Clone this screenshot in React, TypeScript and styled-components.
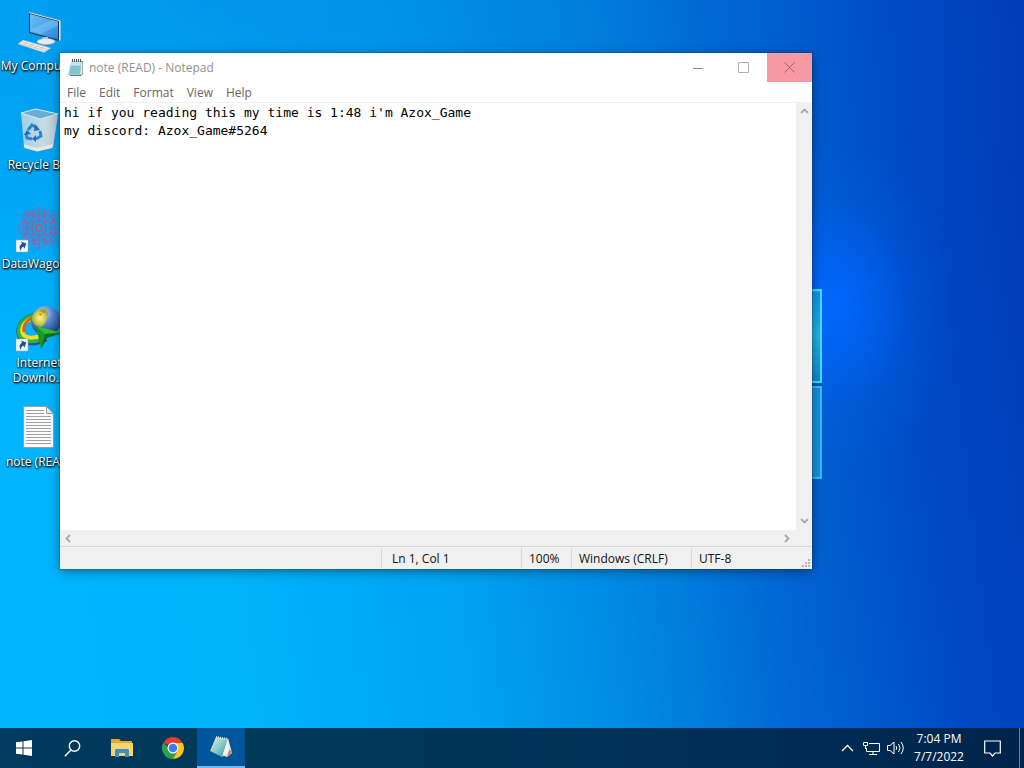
import React from "react";
import styled, { createGlobalStyle } from "styled-components";

const Global = createGlobalStyle`
  * { box-sizing: border-box; }
  html, body, #root { height: 100%; margin: 0; }
  body { font-family: "Open Sans", "Noto Sans", sans-serif; font-size: 12px; overflow: hidden; }
  button, textarea { font: inherit; border: 0; padding: 0; margin: 0; background: none; color: inherit; }
`;

const Screen = styled.div`
  height: 100vh;
  display: flex;
  flex-direction: column;
  background:
    radial-gradient(ellipse 130px 170px at 81% 40%, #0068ff 0%, rgba(0, 102, 252, 0.75) 25%, rgba(0, 98, 245, 0.25) 60%, rgba(0, 96, 240, 0) 100%),
    radial-gradient(ellipse 90% 50% at 20% 0%, rgba(0, 112, 215, 0.4) 0%, rgba(0, 112, 215, 0.2) 50%, rgba(0, 112, 215, 0) 100%),
    linear-gradient(83deg, #00b4ff 0%, #00b4fa 22%, #00a4f2 42%, #0088e2 58%, #0062d0 74%, #0049c4 87%, #0039b4 100%);
`;

const Desktop = styled.main`
  flex: 1;
  position: relative;
  min-height: 0;
`;

const IconColumn = styled.nav`
  display: flex;
  flex-direction: column;
  width: 78px;
  padding-top: 8px;
`;

const Shortcut = styled.button`
  display: flex;
  flex-direction: column;
  align-items: center;
  height: 99px;
  gap: 2px;
  color: #fff;
  line-height: 15px;
  white-space: nowrap;
  text-shadow: 1px 1px 2px #000, 0 1px 2px #000;
`;

const Panes = styled.svg`
  position: absolute;
  left: 728px;
  top: 288px;
`;

const Window = styled.section`
  position: absolute;
  left: 60px;
  top: 53px;
  width: 752px;
  height: 516px;
  display: flex;
  flex-direction: column;
  background: #fff;
  box-shadow: 0 0 1px rgba(0, 30, 60, 0.8), 0 2px 10px rgba(0, 0, 0, 0.45);
`;

const TitleBar = styled.header`
  display: flex;
  height: 29px;
  color: #929292;
`;

const Title = styled.h1`
  flex: 1;
  display: flex;
  align-items: center;
  gap: 4px;
  margin: 0;
  padding-left: 8px;
  font-size: 12px;
  font-weight: 400;
`;

const Caption = styled.button<{ $close?: boolean }>`
  display: flex;
  align-items: center;
  justify-content: center;
  width: 45px;
  height: 29px;
  padding-right: ${(p) => (p.$close ? 1 : 3)}px;
  background: ${(p) => (p.$close ? "#f59aa4" : "transparent")};
`;

const MenuBar = styled.nav`
  display: flex;
  height: 21px;
  gap: 13px;
  padding-left: 7px;
  color: #666;
  border-bottom: 1px solid #f0f0f0;
  button { line-height: 22px; }
`;

const Editor = styled.div`
  flex: 1;
  min-height: 0;
  display: grid;
  grid-template: 1fr 16px / 1fr 16px;
  background: #f0f0f0;
`;

const Text = styled.textarea`
  && {
    width: 100%;
    height: 100%;
    padding: 1px 4px;
    resize: none;
    outline: none;
    overflow: hidden;
    background: #fff;
    color: #000;
    font: 13px/18px "DejaVu Sans Mono", monospace;
  }
`;

const ScrollBar = styled.div<{ $across?: boolean }>`
  display: flex;
  flex-direction: ${(p) => (p.$across ? "row" : "column")};
  justify-content: space-between;
  padding: ${(p) => (p.$across ? "0 2px 0 0" : "0 1px 2px 0")};
  button { display: flex; align-items: center; justify-content: center; width: 16px; height: 16px; }
`;

const StatusBar = styled.footer`
  display: flex;
  height: 23px;
  background: #f0f0f0;
  border-top: 1px solid #d7d7d7;
  color: #111;
  position: relative;
`;

const Cell = styled.span<{ $width?: number; $pad?: number }>`
  flex: ${(p) => (p.$width ? `0 0 ${p.$width}px` : "1")};
  padding-left: ${(p) => p.$pad ?? 7}px;
  margin: 1px 0;
  line-height: 22px;
  white-space: nowrap;
  & + & { border-left: 1px solid #d7d7d7; }
`;

const Grip = styled.svg`
  position: absolute;
  right: 2px;
  bottom: 2px;
`;

const TaskBar = styled.footer`
  display: flex;
  height: 40px;
  background: linear-gradient(90deg, #003a5c 0%, #003658 40%, #002d55 75%, #00234a 100%);
  color: #fff;
`;

const Task = styled.button<{ $width: number; $active?: boolean }>`
  display: flex;
  align-items: center;
  justify-content: center;
  width: ${(p) => p.$width}px;
  height: 40px;
  background: ${(p) => (p.$active ? "#00569a" : "transparent")};
  border-bottom: ${(p) => (p.$active ? "2px solid #76b9ed" : "0")};
`;

const Tray = styled.div`
  display: flex;
  align-items: center;
  margin-left: auto;
`;

const Clock = styled.button`
  width: 58px;
  padding-left: 6px;
  line-height: 18px;
  text-align: center;
  white-space: nowrap;
`;

const ShowDesktop = styled.button`
  width: 5px;
  height: 40px;
  border-left: 1px solid #5f7d97;
`;

const Arrow = ({ turn }: { turn: number }) => (
  <svg width="9" height="9" viewBox="0 0 9 9" fill="none" stroke="#a9a9a9" strokeWidth="1.800">
    <path d="M1 6 4.500 2.500 8 6" transform={`rotate(${turn} 4.500 4.500)`} />
  </svg>
);

const ShortcutMark = () => (
  <g>
    <path d="M0 34h12v12H0z" fill="#f6f8fb" stroke="#9ab" strokeWidth=".5" />
    <path d="M3 44c-.5-4 1-6 4-6v-2.500l4 4-4 4V41c-2 0-3 1-4 3z" fill="#1e4f9c" transform="rotate(-25 6 40)" />
  </g>
);

const Computer = () => (
  <svg width="46" height="48" viewBox="0 0 46 48">
    <defs>
      <linearGradient id="scr" x1="0" y1="0" x2="1" y2="1">
        <stop offset="0" stopColor="#6cc0f5" /><stop offset=".5" stopColor="#4aa8ee" /><stop offset="1" stopColor="#2286dc" />
      </linearGradient>
    </defs>
    <path d="M13 4 43 12v21L13 25z" fill="#24384a" />
    <path d="M13 4 43 12v1L13 5z" fill="#e8eef2" />
    <path d="M14 6 42 13.500v18L14 24z" fill="url(#scr)" />
    <path d="M14 22 36 12l6 1.500v4L24 26.500z" fill="#a9dcfb" opacity=".3" />
    <path d="M43 12v21l1.500-1V13z" fill="#dfe3e6" />
    <path d="M27 29h5l1 5h-8z" fill="#c3cbd1" />
    <ellipse cx="30" cy="33.500" rx="9" ry="3" fill="#e6eaed" stroke="#aab3ba" strokeWidth=".6" />
    <path d="M7 32 35 40l-7 4.500L2 36z" fill="#f1f1ee" stroke="#a5a9a8" strokeWidth=".6" />
    <path d="m6 34 26 7.500M4 35.500 30 43M12 33.500 7 37m11-2-5 3.500m11-2L19 40m10-2-5 4" stroke="#b6bbbb" strokeWidth=".7" />
  </svg>
);

const Bin = () => (
  <svg width="46" height="48" viewBox="0 0 46 48">
    <defs>
      <linearGradient id="bin" x1="0" x2="1"><stop offset="0" stopColor="#b8d3e4" /><stop offset=".6" stopColor="#dbe5eb" /><stop offset="1" stopColor="#aebfca" /></linearGradient>
    </defs>
    <path d="m5 6 19 5 18-4-5 33-16 4-13-4z" fill="url(#bin)" opacity=".88" />
    <path d="M5 6 20 2l22 5-18 5z" fill="#6aaed4" stroke="#dcebf2" strokeWidth="1" />
    <path d="m24 12-3 32 16-4 5-33z" fill="#cbd7de" opacity=".6" />
    <path d="m8 37 13 4 16-4-.5 4-15.500 3.500L8.500 41z" fill="#ebe6e1" />
    <g fill="none" stroke="#2a86cf" strokeWidth="3">
      <path d="m12 23 4-5 5 3" /><path d="m24 24 1 5-5 3" /><path d="m16 32-5-1-1-5" />
    </g>
    <path d="m19 17 5 6-6 1zM20 28v7l-4-3zM8 28l3-5 4 4z" fill="#1c6fbc" />
  </svg>
);

const Wagon = () => {
  const marks = Array.from({ length: 8 }, (_, i) => i * 45);
  return (
    <svg width="46" height="48" viewBox="0 0 46 48" fill="none">
      <g transform="translate(23 22)" stroke="#6d74b8" strokeWidth="1">
        {marks.map((a) => (
          <g key={a} transform={`rotate(${a})`}>
            <path d="M0-3v-18M-5-12h10v-8h-10zM-3-8l8-4M3-8l-8-4" />
            <circle cx="-5" cy="-12" r="1.200" stroke="#b8568c" />
            <circle cx="5" cy="-16" r="1.200" stroke="#b8568c" />
            <path d="M-3-16h6" stroke="#b8568c" />
          </g>
        ))}
        <circle r="7" stroke="#b24f86" /><circle r="3" stroke="#d34c72" strokeWidth="1.500" />
        <path d="M-23-13h46M-20 13h40M-13-21v42M13-21v42" opacity=".7" />
      </g>
      <ShortcutMark />
    </svg>
  );
};

const Globe = () => (
  <svg width="46" height="48" viewBox="0 0 46 48">
    <defs>
      <radialGradient id="earth" cx=".4" cy=".25" r=".8"><stop offset="0" stopColor="#c2dcf6" /><stop offset=".4" stopColor="#5a8ad4" /><stop offset="1" stopColor="#1a367c" /></radialGradient>
      <radialGradient id="land"><stop offset="0" stopColor="#fff09a" /><stop offset=".6" stopColor="#d5cf48" /><stop offset="1" stopColor="#8fac48" /></radialGradient>
    </defs>
    <g fill="none">
      <path d="M18 9C5 12-2 23 3 33c5 8 17 8 28 2" stroke="#2849a8" strokeWidth="2" />
      <path d="M20 10C7 12 0 23 4 31c4 7 15 6 24 2" stroke="#36b428" strokeWidth="4" />
      <path d="M20 13C10 14 4 22 7 29c3 5 11 4 18 2" stroke="#f2dc2c" strokeWidth="4" />
      <path d="M20 12C11 14 7 20 8 27" stroke="#e8541c" strokeWidth="3" />
    </g>
    <circle cx="30" cy="16" r="15" fill="url(#earth)" />
    <path d="M16 11c3-6 8-8 14-7 3 4 3 8 0 11 0 3-2 6-6 7-6-1-9-6-8-11z" fill="url(#land)" />
    <path d="m24 6 3-1 3 2-3 1zM23 8l3 1-2 2z" fill="#d8783e" />
    <path d="m20 21 26 7-15 5-6 11z" fill="#18962a" />
    <path d="m20 21 26 7-17 1z" fill="#2fbb35" /><path d="m29 29-4 15 6-11 15-5z" fill="#0c6b1b" />
    <ShortcutMark />
  </svg>
);

const Paper = () => (
  <svg width="46" height="48" viewBox="0 0 46 48">
    <path d="M7.500 2.500h23l7 7v34h-30z" fill="#fbfbfb" stroke="#9c9c9c" />
    <path d="M30.500 2.500v7h7z" fill="#e7e7e7" stroke="#9c9c9c" />
    <path d="M10 6.500h18M10 9.500h18M10 12.500h25M10 15.500h25M10 18.500h25M10 21.500h25M10 24.500h25M10 27.500h25M10 30.500h25M10 33.500h25M10 36.500h25M10 39.500h25" stroke="#a2a2a2" />
  </svg>
);

const Pad = () => (
  <svg width="17" height="18" viewBox="0 0 17 18">
    <path d="M4 2h11v13l-2 2H2z" fill="#5f7f86" />
    <path d="M3.500 2.500H13L12 16H0z" fill="#8fccd6" />
    <path d="M3.500 2.500H13l-.5 4H2.700z" fill="#c3e8ec" />
    <path d="M13 3h1.500v12L12 16z" fill="#dbe9ea" />
    <path d="M4.500 0v3m2-3v3m2-3v3m2-3v3m2-3v3" stroke="#4c5c5c" />
    <path d="M3 8h9M2.500 10.500h9M2 13h9" stroke="#66aebd" strokeWidth=".7" />
  </svg>
);

const TiltedPad = () => (
  <svg width="26" height="24" viewBox="0 0 26 24">
    <defs><linearGradient id="pad" x1="0" y1="0" x2="1" y2="1"><stop offset="0" stopColor="#e2f5ef" /><stop offset=".5" stopColor="#8ccbc7" /><stop offset="1" stopColor="#318b98" /></linearGradient></defs>
    <path d="m20 3 4 15-5 4-5-2z" fill="#e9e5dc" /><path d="m21 14 3 3-5 5z" fill="#d48057" />
    <path d="m8 2 12 2-6 18-12-6z" fill="url(#pad)" />
    <path d="m20 4 1 12-7 6z" fill="#eef5f3" />
    <path d="m8 2 12 2" stroke="#d9e3e2" strokeWidth="2" strokeDasharray="1 1" />
  </svg>
);

const items = [
  { label: "My Computer", art: <Computer /> },
  { label: "Recycle Bin", art: <Bin /> },
  { label: "DataWagon...", art: <Wagon /> },
  { label: "Internet\nDownlo...", art: <Globe /> },
  { label: "note (READ)", art: <Paper /> },
];

const ItemLabel = styled.span`
  white-space: pre;
`;

export default function App() {
  return (
    <Screen>
      <Global />
      <Desktop>
        <IconColumn aria-label="Desktop">
          {items.map((it) => (
            <Shortcut key={it.label}>{it.art}<ItemLabel>{it.label}</ItemLabel></Shortcut>
          ))}
        </IconColumn>
        <Panes width="96" height="194" viewBox="0 0 96 194" aria-hidden="true">
          <defs>
            <linearGradient id="p1" x1="0" y1="0" x2="0" y2="1"><stop offset="0" stopColor="#0c93ec" /><stop offset=".5" stopColor="#22b4de" /><stop offset="1" stopColor="#1187d2" /></linearGradient>
          </defs>
          <path d="M0 4 93 2v92H0z" fill="url(#p1)" stroke="#43dcf6" strokeWidth="2" />
          <path d="M0 99h93v91l-93-2z" fill="#1690df" stroke="#34bcf4" strokeWidth="2" />
          <path d="M0 96.500h94" stroke="#035bb0" strokeWidth="3" />
        </Panes>
        <Window aria-label="Notepad">
          <TitleBar>
            <Title><Pad />note (READ) - Notepad</Title>
            <Caption aria-label="Minimize"><svg width="10" height="10"><path d="M0 5.500h10" stroke="#8a8a8a" /></svg></Caption>
            <Caption aria-label="Maximize"><svg width="11" height="11"><path d="M.5.5h10v10H.5z" fill="none" stroke="#b0b0b0" /></svg></Caption>
            <Caption $close aria-label="Close"><svg width="11" height="11"><path d="m.5.5 10 10m0-10-10 10" stroke="#a8606c" /></svg></Caption>
          </TitleBar>
          <MenuBar>
            {["File", "Edit", "Format", "View", "Help"].map((m) => <button key={m}>{m}</button>)}
          </MenuBar>
          <Editor>
            <Text aria-label="Document" spellCheck={false} defaultValue={"hi if you reading this my time is 1:48 i'm Azox_Game\nmy discord: Azox_Game#5264"} />
            <ScrollBar>
              <button aria-label="Scroll up"><Arrow turn={0} /></button>
              <button aria-label="Scroll down"><Arrow turn={180} /></button>
            </ScrollBar>
            <ScrollBar $across>
              <button aria-label="Scroll left"><Arrow turn={270} /></button>
              <button aria-label="Scroll right"><Arrow turn={90} /></button>
            </ScrollBar>
          </Editor>
          <StatusBar>
            <Cell />
            <Cell $width={140} $pad={10}>Ln 1, Col 1</Cell>
            <Cell $width={50}>100%</Cell>
            <Cell $width={120}>Windows (CRLF)</Cell>
            <Cell $width={121}>UTF-8</Cell>
            <Grip width="8" height="8" fill="#b5b5b5"><path d="M6 0h2v2H6zM3 3h2v2H3zM6 3h2v2H6zM0 6h2v2H0zM3 6h2v2H3zM6 6h2v2H6z" /></Grip>
          </StatusBar>
        </Window>
      </Desktop>
      <TaskBar>
        <Task $width={48} aria-label="Start">
          <svg width="16" height="16" fill="#fff"><path d="M0 2.300 6.500 1.400V7.500H0zM7.500 1.200 16 0v7.500H7.500zM0 8.500h6.500v6.100L0 13.700zM7.500 8.500H16V16l-8.500-1.200z" /></svg>
        </Task>
        <Task $width={48} aria-label="Search">
          <svg width="17" height="17" fill="none" stroke="#fff" strokeWidth="1.400"><circle cx="10.500" cy="6" r="5.200" /><path d="M7 10 .8 16.200" /></svg>
        </Task>
        <Task $width={52} aria-label="File Explorer">
          <svg width="22" height="18"><path d="M0 0h8l2 2h11v5H0z" fill="#e5a832" /><path d="M0 4h22v13H0z" fill="#fbd667" /><path d="M4 18v-7l1-1h12l1 1v7h-4v-4H8v4z" fill="#3a8fd0" /></svg>
        </Task>
        <Task $width={49} aria-label="Google Chrome">
          <svg width="24" height="24" viewBox="0 0 24 24">
            <path d="M12 12 2.500 6.500A11 11 0 0 1 21.500 6.500z" fill="#e33b2e" />
            <path d="M12 12h-4L2.470 6.500A11 11 0 0 0 12 23l5-9z" fill="#2da14c" />
            <path d="M12 7h9.800A11 11 0 0 1 12 23l5-9z" fill="#fbc618" />
            <circle cx="12" cy="12" r="5.500" fill="#fff" /><circle cx="12" cy="12" r="4.300" fill="#3b7ded" />
          </svg>
        </Task>
        <Task $width={48} $active aria-label="Notepad"><TiltedPad /></Task>
        <Tray>
          <Task $width={24} aria-label="Show hidden icons"><svg width="13" height="8" fill="none" stroke="#fff" strokeWidth="1.300"><path d="M1 7 6.500 1.500 12 7" /></svg></Task>
          <Task $width={24} aria-label="Network"><svg width="17" height="15" fill="none" stroke="#fff"><path d="M6 2.500h10.500v8H3.500V7M10 10.500v3M6 13.500h8M.5 1.500h4v3h-4zM2.500 4.500V8" /></svg></Task>
          <Task $width={24} aria-label="Volume"><svg width="17" height="14" fill="none" stroke="#fff"><path d="M.5 4.500H3l4-3.500v12L3 9.500H.5zM9 5q1.500 2 0 4M11.500 3q3 4 0 8M14 1q4.500 6 0 12" /></svg></Task>
          <Clock>7:04 PM<br />7/7/2022</Clock>
          <Task $width={54} aria-label="Notifications"><svg width="17" height="17" fill="none" stroke="#fff" strokeWidth="1.200"><path d="M.7 1h15.600v12H11l-2.500 3L6 13H.7z" /></svg></Task>
          <ShowDesktop aria-label="Show desktop" />
        </Tray>
      </TaskBar>
    </Screen>
  );
}
